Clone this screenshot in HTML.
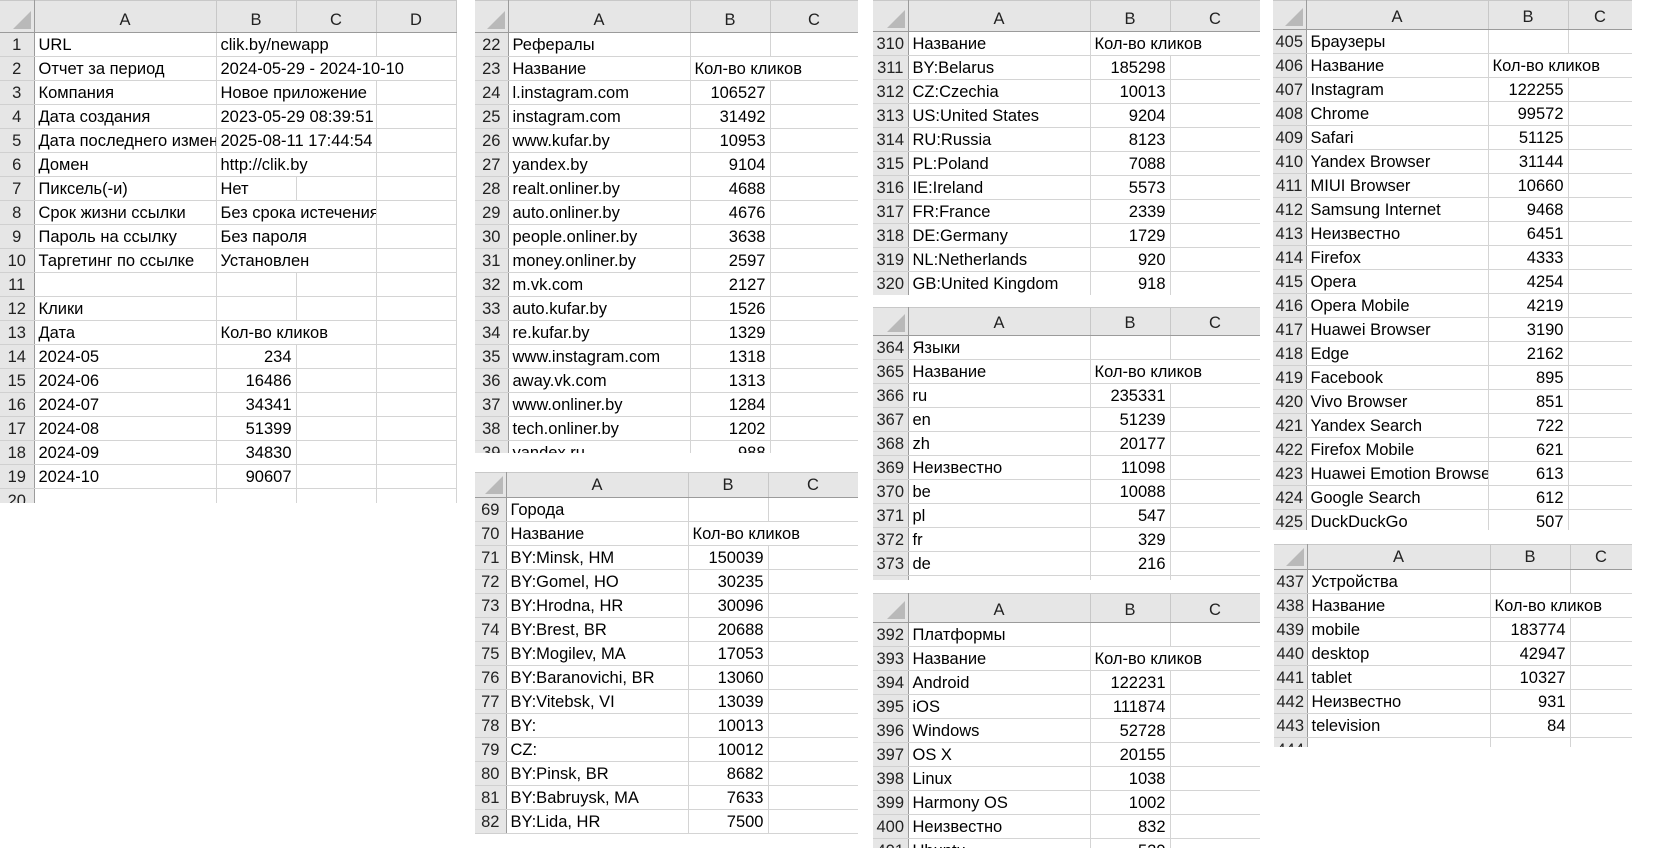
<!DOCTYPE html>
<html><head><meta charset="utf-8">
<style>
body{margin:0;width:1668px;height:848px;background:#fff;position:relative;overflow:hidden;font-family:"Liberation Sans","DejaVu Sans",sans-serif;}
.p{position:absolute;overflow:hidden;background:#fff}
table{border-collapse:collapse;table-layout:fixed}
td{height:23px;padding:0 0 0 4px;border:1px solid #d4d4d4;white-space:nowrap;overflow:hidden;font-size:16.5px;line-height:22px;color:#000}
td.r{background:#e6e6e6;text-align:center;padding:0;border-right:1px solid #9b9b9b;border-bottom:1px solid #d0d0d0;color:#222}
td.n{text-align:right;padding:0 4px 0 0}
tr.h td{background:#e6e6e6;text-align:center;padding:0;border:1px solid #c8c8c8;border-bottom:1px solid #9b9b9b;color:#222;vertical-align:bottom;line-height:24px}
tr.h td.c{border-right:1px solid #9b9b9b;position:relative}
.tri{position:absolute;right:3px;bottom:3px;width:0;height:0;border-left:18px solid transparent;border-bottom:18px solid #b9b9b9}
tr.h td:first-child{border-left:none}
tr td:first-child{border-left:none}
</style></head><body>

<div class="p" style="left:0;top:0;width:457px;height:503px">
<table style="width:456px"><colgroup><col style="width:34px"><col style="width:182px"><col style="width:80px"><col style="width:80px"><col style="width:80px"></colgroup>
<tr class="h" style="height:32px"><td class="c" style="height:31px"><div class="tri"></div></td><td>A</td><td>B</td><td>C</td><td>D</td></tr>
<tr><td class="r">1</td><td>URL</td><td colspan="2">clik.by/newapp</td><td></td></tr>
<tr><td class="r">2</td><td>Отчет за период</td><td colspan="3">2024-05-29 - 2024-10-10</td></tr>
<tr><td class="r">3</td><td>Компания</td><td colspan="2">Новое приложение</td><td></td></tr>
<tr><td class="r">4</td><td>Дата создания</td><td colspan="2">2023-05-29 08:39:51</td><td></td></tr>
<tr><td class="r">5</td><td style="text-overflow:clip">Дата последнего изменения</td><td colspan="2">2025-08-11 17:44:54</td><td></td></tr>
<tr><td class="r">6</td><td>Домен</td><td colspan="2">http://clik.by</td><td></td></tr>
<tr><td class="r">7</td><td>Пиксель(-и)</td><td>Нет</td><td></td><td></td></tr>
<tr><td class="r">8</td><td>Срок жизни ссылки</td><td colspan="2">Без срока истечения</td><td></td></tr>
<tr><td class="r">9</td><td>Пароль на ссылку</td><td colspan="2">Без пароля</td><td></td></tr>
<tr><td class="r">10</td><td>Таргетинг по ссылке</td><td colspan="2">Установлен</td><td></td></tr>
<tr><td class="r">11</td><td></td><td></td><td></td><td></td></tr>
<tr><td class="r">12</td><td>Клики</td><td></td><td></td><td></td></tr>
<tr><td class="r">13</td><td>Дата</td><td colspan="2">Кол-во кликов</td><td></td></tr>
<tr><td class="r">14</td><td>2024-05</td><td class="n">234</td><td></td><td></td></tr>
<tr><td class="r">15</td><td>2024-06</td><td class="n">16486</td><td></td><td></td></tr>
<tr><td class="r">16</td><td>2024-07</td><td class="n">34341</td><td></td><td></td></tr>
<tr><td class="r">17</td><td>2024-08</td><td class="n">51399</td><td></td><td></td></tr>
<tr><td class="r">18</td><td>2024-09</td><td class="n">34830</td><td></td><td></td></tr>
<tr><td class="r">19</td><td>2024-10</td><td class="n">90607</td><td></td><td></td></tr>
<tr><td class="r">20</td><td></td><td></td><td></td><td></td></tr>
</table></div>

<div class="p" style="left:475px;top:0;width:383px;height:453px">
<table style="width:383px"><colgroup><col style="width:33px"><col style="width:182px"><col style="width:80px"><col style="width:88px"></colgroup>
<tr class="h"><td class="c" style="height:31px"><div class="tri"></div></td><td>A</td><td>B</td><td>C</td></tr>
<tr><td class="r">22</td><td>Рефералы</td><td></td><td></td></tr>
<tr><td class="r">23</td><td>Название</td><td colspan="2">Кол-во кликов</td></tr>
<tr><td class="r">24</td><td>l.instagram.com</td><td class="n">106527</td><td></td></tr>
<tr><td class="r">25</td><td>instagram.com</td><td class="n">31492</td><td></td></tr>
<tr><td class="r">26</td><td>www.kufar.by</td><td class="n">10953</td><td></td></tr>
<tr><td class="r">27</td><td>yandex.by</td><td class="n">9104</td><td></td></tr>
<tr><td class="r">28</td><td>realt.onliner.by</td><td class="n">4688</td><td></td></tr>
<tr><td class="r">29</td><td>auto.onliner.by</td><td class="n">4676</td><td></td></tr>
<tr><td class="r">30</td><td>people.onliner.by</td><td class="n">3638</td><td></td></tr>
<tr><td class="r">31</td><td>money.onliner.by</td><td class="n">2597</td><td></td></tr>
<tr><td class="r">32</td><td>m.vk.com</td><td class="n">2127</td><td></td></tr>
<tr><td class="r">33</td><td>auto.kufar.by</td><td class="n">1526</td><td></td></tr>
<tr><td class="r">34</td><td>re.kufar.by</td><td class="n">1329</td><td></td></tr>
<tr><td class="r">35</td><td>www.instagram.com</td><td class="n">1318</td><td></td></tr>
<tr><td class="r">36</td><td>away.vk.com</td><td class="n">1313</td><td></td></tr>
<tr><td class="r">37</td><td>www.onliner.by</td><td class="n">1284</td><td></td></tr>
<tr><td class="r">38</td><td>tech.onliner.by</td><td class="n">1202</td><td></td></tr>
<tr><td class="r">39</td><td>yandex.ru</td><td class="n">988</td><td></td></tr>
</table></div>

<div class="p" style="left:475px;top:472px;width:383px;height:362px">
<table style="width:383px"><colgroup><col style="width:31px"><col style="width:182px"><col style="width:80px"><col style="width:90px"></colgroup>
<tr class="h"><td class="c" style="height:24px"><div class="tri"></div></td><td>A</td><td>B</td><td>C</td></tr>
<tr><td class="r">69</td><td>Города</td><td></td><td></td></tr>
<tr><td class="r">70</td><td>Название</td><td colspan="2">Кол-во кликов</td></tr>
<tr><td class="r">71</td><td>BY:Minsk, HM</td><td class="n">150039</td><td></td></tr>
<tr><td class="r">72</td><td>BY:Gomel, HO</td><td class="n">30235</td><td></td></tr>
<tr><td class="r">73</td><td>BY:Hrodna, HR</td><td class="n">30096</td><td></td></tr>
<tr><td class="r">74</td><td>BY:Brest, BR</td><td class="n">20688</td><td></td></tr>
<tr><td class="r">75</td><td>BY:Mogilev, MA</td><td class="n">17053</td><td></td></tr>
<tr><td class="r">76</td><td>BY:Baranovichi, BR</td><td class="n">13060</td><td></td></tr>
<tr><td class="r">77</td><td>BY:Vitebsk, VI</td><td class="n">13039</td><td></td></tr>
<tr><td class="r">78</td><td>BY:</td><td class="n">10013</td><td></td></tr>
<tr><td class="r">79</td><td>CZ:</td><td class="n">10012</td><td></td></tr>
<tr><td class="r">80</td><td>BY:Pinsk, BR</td><td class="n">8682</td><td></td></tr>
<tr><td class="r">81</td><td>BY:Babruysk, MA</td><td class="n">7633</td><td></td></tr>
<tr><td class="r">82</td><td>BY:Lida, HR</td><td class="n">7500</td><td></td></tr>
</table></div>

<div class="p" style="left:873px;top:0;width:387px;height:295px">
<table style="width:387px"><colgroup><col style="width:35px"><col style="width:182px"><col style="width:80px"><col style="width:90px"></colgroup>
<tr class="h"><td class="c" style="height:30px"><div class="tri"></div></td><td>A</td><td>B</td><td>C</td></tr>
<tr><td class="r">310</td><td>Название</td><td colspan="2">Кол-во кликов</td></tr>
<tr><td class="r">311</td><td>BY:Belarus</td><td class="n">185298</td><td></td></tr>
<tr><td class="r">312</td><td>CZ:Czechia</td><td class="n">10013</td><td></td></tr>
<tr><td class="r">313</td><td>US:United States</td><td class="n">9204</td><td></td></tr>
<tr><td class="r">314</td><td>RU:Russia</td><td class="n">8123</td><td></td></tr>
<tr><td class="r">315</td><td>PL:Poland</td><td class="n">7088</td><td></td></tr>
<tr><td class="r">316</td><td>IE:Ireland</td><td class="n">5573</td><td></td></tr>
<tr><td class="r">317</td><td>FR:France</td><td class="n">2339</td><td></td></tr>
<tr><td class="r">318</td><td>DE:Germany</td><td class="n">1729</td><td></td></tr>
<tr><td class="r">319</td><td>NL:Netherlands</td><td class="n">920</td><td></td></tr>
<tr><td class="r">320</td><td>GB:United Kingdom</td><td class="n">918</td><td></td></tr>
</table></div>

<div class="p" style="left:873px;top:307px;width:387px;height:273px">
<table style="width:387px"><colgroup><col style="width:35px"><col style="width:182px"><col style="width:80px"><col style="width:90px"></colgroup>
<tr class="h"><td class="c" style="height:27px"><div class="tri"></div></td><td>A</td><td>B</td><td>C</td></tr>
<tr><td class="r">364</td><td>Языки</td><td></td><td></td></tr>
<tr><td class="r">365</td><td>Название</td><td colspan="2">Кол-во кликов</td></tr>
<tr><td class="r">366</td><td>ru</td><td class="n">235331</td><td></td></tr>
<tr><td class="r">367</td><td>en</td><td class="n">51239</td><td></td></tr>
<tr><td class="r">368</td><td>zh</td><td class="n">20177</td><td></td></tr>
<tr><td class="r">369</td><td>Неизвестно</td><td class="n">11098</td><td></td></tr>
<tr><td class="r">370</td><td>be</td><td class="n">10088</td><td></td></tr>
<tr><td class="r">371</td><td>pl</td><td class="n">547</td><td></td></tr>
<tr><td class="r">372</td><td>fr</td><td class="n">329</td><td></td></tr>
<tr><td class="r">373</td><td>de</td><td class="n">216</td><td></td></tr>
<tr><td class="r"></td><td></td><td></td><td></td></tr>
</table></div>

<div class="p" style="left:873px;top:593px;width:387px;height:255px">
<table style="width:387px"><colgroup><col style="width:35px"><col style="width:182px"><col style="width:80px"><col style="width:90px"></colgroup>
<tr class="h"><td class="c" style="height:28px"><div class="tri"></div></td><td>A</td><td>B</td><td>C</td></tr>
<tr><td class="r">392</td><td>Платформы</td><td></td><td></td></tr>
<tr><td class="r">393</td><td>Название</td><td colspan="2">Кол-во кликов</td></tr>
<tr><td class="r">394</td><td>Android</td><td class="n">122231</td><td></td></tr>
<tr><td class="r">395</td><td>iOS</td><td class="n">111874</td><td></td></tr>
<tr><td class="r">396</td><td>Windows</td><td class="n">52728</td><td></td></tr>
<tr><td class="r">397</td><td>OS X</td><td class="n">20155</td><td></td></tr>
<tr><td class="r">398</td><td>Linux</td><td class="n">1038</td><td></td></tr>
<tr><td class="r">399</td><td>Harmony OS</td><td class="n">1002</td><td></td></tr>
<tr><td class="r">400</td><td>Неизвестно</td><td class="n">832</td><td></td></tr>
<tr><td class="r">401</td><td>Ubuntu</td><td class="n">529</td><td></td></tr>
</table></div>

<div class="p" style="left:1273px;top:0;width:359px;height:530px">
<table style="width:359px"><colgroup><col style="width:33px"><col style="width:182px"><col style="width:80px"><col style="width:64px"></colgroup>
<tr class="h"><td class="c" style="height:28px"><div class="tri"></div></td><td>A</td><td>B</td><td>C</td></tr>
<tr><td class="r">405</td><td>Браузеры</td><td></td><td></td></tr>
<tr><td class="r">406</td><td>Название</td><td colspan="2">Кол-во кликов</td></tr>
<tr><td class="r">407</td><td>Instagram</td><td class="n">122255</td><td></td></tr>
<tr><td class="r">408</td><td>Chrome</td><td class="n">99572</td><td></td></tr>
<tr><td class="r">409</td><td>Safari</td><td class="n">51125</td><td></td></tr>
<tr><td class="r">410</td><td>Yandex Browser</td><td class="n">31144</td><td></td></tr>
<tr><td class="r">411</td><td>MIUI Browser</td><td class="n">10660</td><td></td></tr>
<tr><td class="r">412</td><td>Samsung Internet</td><td class="n">9468</td><td></td></tr>
<tr><td class="r">413</td><td>Неизвестно</td><td class="n">6451</td><td></td></tr>
<tr><td class="r">414</td><td>Firefox</td><td class="n">4333</td><td></td></tr>
<tr><td class="r">415</td><td>Opera</td><td class="n">4254</td><td></td></tr>
<tr><td class="r">416</td><td>Opera Mobile</td><td class="n">4219</td><td></td></tr>
<tr><td class="r">417</td><td>Huawei Browser</td><td class="n">3190</td><td></td></tr>
<tr><td class="r">418</td><td>Edge</td><td class="n">2162</td><td></td></tr>
<tr><td class="r">419</td><td>Facebook</td><td class="n">895</td><td></td></tr>
<tr><td class="r">420</td><td>Vivo Browser</td><td class="n">851</td><td></td></tr>
<tr><td class="r">421</td><td>Yandex Search</td><td class="n">722</td><td></td></tr>
<tr><td class="r">422</td><td>Firefox Mobile</td><td class="n">621</td><td></td></tr>
<tr><td class="r">423</td><td>Huawei Emotion Browser</td><td class="n">613</td><td></td></tr>
<tr><td class="r">424</td><td>Google Search</td><td class="n">612</td><td></td></tr>
<tr><td class="r">425</td><td>DuckDuckGo</td><td class="n">507</td><td></td></tr>
</table></div>

<div class="p" style="left:1274px;top:544px;width:358px;height:203px">
<table style="width:358px"><colgroup><col style="width:33px"><col style="width:183px"><col style="width:80px"><col style="width:62px"></colgroup>
<tr class="h"><td class="c" style="height:24px"><div class="tri"></div></td><td>A</td><td>B</td><td>C</td></tr>
<tr><td class="r">437</td><td>Устройства</td><td></td><td></td></tr>
<tr><td class="r">438</td><td>Название</td><td colspan="2">Кол-во кликов</td></tr>
<tr><td class="r">439</td><td>mobile</td><td class="n">183774</td><td></td></tr>
<tr><td class="r">440</td><td>desktop</td><td class="n">42947</td><td></td></tr>
<tr><td class="r">441</td><td>tablet</td><td class="n">10327</td><td></td></tr>
<tr><td class="r">442</td><td>Неизвестно</td><td class="n">931</td><td></td></tr>
<tr><td class="r">443</td><td>television</td><td class="n">84</td><td></td></tr>
<tr><td class="r">444</td><td></td><td></td><td></td></tr>
</table></div>

</body></html>
